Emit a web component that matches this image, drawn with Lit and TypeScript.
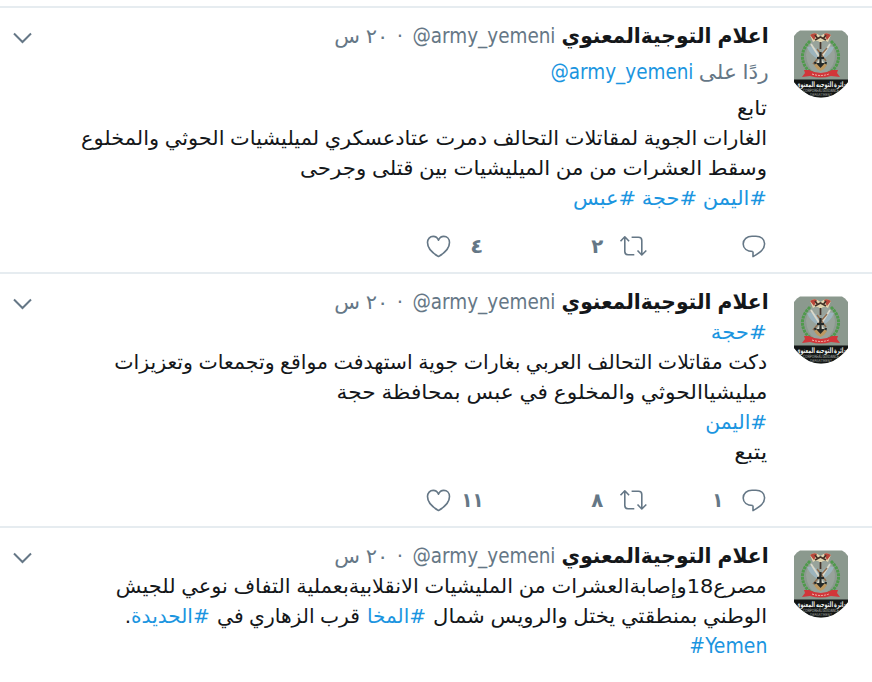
import { LitElement, html, svg, css, nothing } from 'lit';
import { customElement, property } from 'lit/decorators.js';

// One line of text, stretched horizontally to a given width.
@customElement('fit-text')
class FitText extends LitElement {
  static styles = css`
    :host {
      display: block;
      flex: none;
      white-space: nowrap;
      height: 100%;
    }

    .text {
      display: inline-block;
      transform-origin: right center;
    }
  `;

  @property({ type: Number }) width = 0;

  firstUpdated() {
    const text = this.renderRoot.querySelector('.text') as HTMLElement;
    const natural = text.getBoundingClientRect().width;
    this.style.width = `${this.width}px`;
    text.style.transform = `scaleX(${this.width / natural})`;
  }

  render() {
    return html`<span class="text"><slot></slot></span>`;
  }
}

interface Segment {
  width: number;
  parts: string[];
}

interface Tweet {
  reply?: boolean;
  lines: Segment[][];
  counts?: { reply?: Segment; retweet: Segment; like: Segment };
}

const seg = (width: number, ...parts: string[]): Segment => ({ width, parts });

const tweets: Tweet[] = [
  {
    reply: true,
    lines: [
      [seg(30, 'تابع')],
      [seg(686, 'الغارات الجوية لمقاتلات التحالف دمرت عتادعسكري لميليشيات الحوثي والمخلوع')],
      [seg(467, 'وسقط العشرات من من الميليشيات بين قتلى وجرحى')],
      [seg(194, '#اليمن', ' ', '#حجة', ' ', '#عبس')],
    ],
    counts: { retweet: seg(12, '٢'), like: seg(13, '٤') },
  },
  {
    lines: [
      [seg(56, '#حجة')],
      [seg(653, 'دكت مقاتلات التحالف العربي بغارات جوية استهدفت مواقع وتجمعات وتعزيزات')],
      [seg(431, 'ميليشياالحوثي والمخلوع في عبس بمحافظة حجة')],
      [seg(62, '#اليمن')],
      [seg(33, 'يتبع')],
    ],
    counts: { reply: seg(11, '١'), retweet: seg(12, '٨'), like: seg(22, '١١') },
  },
  {
    lines: [
      [seg(651, 'مصرع18وإصابةالعشرات من المليشيات الانقلابيةبعملية التفاف نوعي للجيش')],
      [
        seg(334, 'الوطني بمنطقتي يختل والرويس شمال'),
        seg(59, '#المخا'),
        seg(143, 'قرب الزهاري في'),
        seg(85, '#الحديدة', '.'),
      ],
      [seg(78, '#Yemen')],
    ],
  },
];

const avatar = svg`
  <svg class="avatar" viewBox="0 0 56 68">
    <defs>
      <clipPath id="frame">
        <path d="M7 .5H49Q52 1.500 55 6V52Q49 60 40 65Q28 70 16 65Q7 60 1 52V6Q4 1.500 7 .5Z" />
      </clipPath>
    </defs>
    <g clip-path="url(#frame)">
      <rect width="56" height="68" fill="#8b998e" />
      <path d="M27.500 7Q15 9 13 25Q14 37 22 43H33Q42 36 42 25Q40 9 27.500 7Z" fill="#98a39b" />
      <g fill="none" stroke="#4f9a4c" stroke-width="3" stroke-dasharray="2.800 .8">
        <path d="M17 11Q5 23 12 36Q15 41 21 44" />
        <path d="M38 11Q50 23 43 36Q40 41 34 44" />
      </g>
      <path d="M14 17Q21 15 26 21L25 29Q17 25 14 17ZM41 17Q34 15 29 21L30 29Q38 25 41 17Z" fill="#9cb4bd" />
      <path d="M18 14L32 36M37 14L23 36" stroke="#dad8ca" stroke-width="1.800" />
      <path d="M20 34L34 18M24 19L33 31" stroke="#8f6d50" stroke-width="1.500" />
      <path d="M17 5Q22 1 27.500 6Q33 1 38 5L35 12Q31 9 27.500 13Q24 9 20 12Z" fill="#e2d6b1" />
      <path d="M17 5Q21 2 24 4L21 10ZM38 5Q34 2 31 4L34 10Z" fill="#b9473b" />
      <path d="M22 5L25 9M33 5L30 9M22 10L27.500 7L33 10M27.500 12V19" fill="none" stroke="#443329" stroke-width="1.700" />
      <path d="M27.500 22V38M22 32Q23 37 27.500 38Q32 37 33 32M24 28H31" fill="none" stroke="#252a29" stroke-width="2.200" />
      <path d="M21 35L24 33L27.500 36L31 33L34 35L31 39L27.500 41L24 39Z" fill="#bd9860" />
      <path d="M23 33H32L27.500 38Z" fill="#252a29" />
      <path d="M11 40H16Q28 46 39 40H45L44 43L47 47L38 46Q28 49 17 46L9 47L12 43Z" fill="#d2363a" />
      <path d="M19 44Q28 47 36 44" fill="none" stroke="#efb3aa" stroke-width="1" stroke-dasharray="2 1" />
      <rect y="49.500" width="56" height="19" fill="#121514" />
      <text x="28" y="56.500" text-anchor="middle" direction="rtl" font-size="7.500" font-weight="bold" fill="#edf0ed" textLength="50" lengthAdjust="spacingAndGlyphs">دائرة التوجيه المعنوي</text>
      <text x="28" y="61.500" text-anchor="middle" direction="ltr" font-size="4.500" fill="#b5bab6" textLength="36" lengthAdjust="spacingAndGlyphs">CORPOREAL GUIDANCE</text>
      <text x="28" y="65.500" text-anchor="middle" direction="ltr" font-size="3.800" fill="#9aa09c" textLength="22" lengthAdjust="spacingAndGlyphs">DEPARTMENT</text>
    </g>
  </svg>`;

const replyIcon = svg`
  <svg class="icon comment" viewBox="0 0 24 23">
    <path d="M10.800 16.500C5 16.300 1.200 13.300 1.200 9C1.200 4.300 5 1.200 10 1.200H14C19 1.200 22.600 4.200 22.600 8.700C22.600 15 16.500 18.500 11 21.600V16.500" />
  </svg>`;

const retweetIcon = svg`
  <svg class="icon retweet" viewBox="0 0 29 22">
    <path d="M1.500 6.300L5.800 1.800L10.100 6.300M5.800 2.300V16.500Q5.800 19.700 9 19.700H15.300M12.600 2.300H19.500Q22.800 2.300 22.800 5.500V19.700M18.500 15.500L22.800 20L27.300 15.500" />
  </svg>`;

const likeIcon = svg`
  <svg class="icon like" viewBox="0 0 25 23">
    <path d="M12.500 21.500C8 19 1.500 14 1.500 7.600C1.500 3.800 4 1.400 7.200 1.400C9.600 1.400 11.500 2.800 12.500 5.200C13.500 2.800 15.400 1.400 17.800 1.400C21 1.400 23.500 3.800 23.500 7.600C23.500 14 17 19 12.500 21.500Z" />
  </svg>`;

@customElement('app-root')
class AppRoot extends LitElement {
  static styles = css`
    :host {
      display: block;
      box-sizing: border-box;
      height: 682px;
      padding-top: 6px;
      overflow: hidden;
      background: #fff;
      color: #14171a;
      direction: rtl;
      font-family: "DejaVu Sans", sans-serif;
      font-size: 20px;
      line-height: 30px;
      word-spacing: -1px;
    }

    .tweet {
      display: grid;
      grid-template-columns: 56px 1fr;
      column-gap: 24px;
      padding: 14px 23px 0 12px;
      border-top: 2px solid #e6ecf0;
    }

    .avatar {
      display: block;
      width: 56px;
      height: 68px;
      margin-top: 8px;
    }

    .header {
      display: flex;
      height: 29px;
      color: #657786;
      line-height: 28px;
    }

    .name {
      color: #14171a;
      font-size: 21.5px;
      font-weight: bold;
      margin-left: 7px;
    }

    .latin {
      font-family: "DejaVu Sans Condensed", "DejaVu Sans", sans-serif;
      font-stretch: condensed;
      font-size: 20.5px;
    }

    .dot {
      width: 24px;
      text-align: center;
    }

    .chevron {
      width: 21px;
      height: 12px;
      margin: 10px auto 0 0;
      fill: none;
      stroke: #657786;
      stroke-width: 2;
    }

    .reply {
      display: flex;
      gap: 6px;
      height: 30px;
      padding: 6px 0;
      color: #657786;
    }

    .body {
      padding-right: 2px;
    }

    .line {
      display: flex;
      gap: 7px;
      height: 30px;
    }

    .link {
      color: #1b95e0;
    }

    .actions {
      display: flex;
      height: 30px;
      padding: 18px 3px 11px 0;
      color: #657786;
      font-size: 20px;
      font-weight: bold;
    }

    .action {
      display: flex;
      align-items: center;
      gap: 16px;
    }

    .action:nth-child(1) {
      width: 118px;
      gap: 19px;
    }

    .action:nth-child(2) {
      width: 165px;
    }

    .action:nth-child(3) {
      gap: 0;
    }

    .icon {
      flex: none;
      fill: none;
      stroke: #657786;
      stroke-width: 1.6;
      stroke-linejoin: round;
    }

    .comment {
      width: 24px;
      height: 23px;
    }

    .retweet {
      width: 29px;
      height: 22px;
    }

    .like {
      width: 25px;
      height: 23px;
      margin-right: 19px;
    }

    .wide .like {
      margin-right: 10px;
    }
  `;

  renderPart(part: string) {
    if (!part.startsWith('#')) return part;
    return /[a-z]/i.test(part)
      ? html`<bdi class="link latin" dir="ltr">${part}</bdi>`
      : html`<bdi class="link" dir="rtl">${part}</bdi>`;
  }

  renderSegment(segment?: Segment) {
    return segment
      ? html`<fit-text width=${segment.width}>${segment.parts.map((part) => this.renderPart(part))}</fit-text>`
      : nothing;
  }

  renderActions({ counts }: Tweet) {
    if (!counts) return nothing;
    const wide = counts.like.width > 16;
    return html`
      <div class="actions">
        <div class="action">${replyIcon}${this.renderSegment(counts.reply)}</div>
        <div class="action">${retweetIcon}${this.renderSegment(counts.retweet)}</div>
        <div class="action ${wide ? 'wide' : ''}">
          ${this.renderSegment(counts.like)}${likeIcon}
        </div>
      </div>
    `;
  }

  renderTweet(tweet: Tweet) {
    return html`
      <article class="tweet">
        ${avatar}
        <div>
          <div class="header">
            <fit-text class="name" width="207">اعلام التوجيةالمعنوي</fit-text>
            <fit-text width="143"><bdi class="latin" dir="ltr">@army_yemeni</bdi></fit-text>
            <span class="dot">·</span>
            <fit-text width="54">٢٠ س</fit-text>
            <svg class="chevron" viewBox="0 0 21 12"><path d="M2 1.500L10.500 10L19 1.500" /></svg>
          </div>
          ${tweet.reply
            ? html`<div class="reply">
                <fit-text width="70">ردًا على</fit-text>
                <fit-text width="143"><bdi class="link latin" dir="ltr">@army_yemeni</bdi></fit-text>
              </div>`
            : nothing}
          <div class="body">
            ${tweet.lines.map(
              (line) => html`<div class="line">${line.map((segment) => this.renderSegment(segment))}</div>`
            )}
          </div>
          ${this.renderActions(tweet)}
        </div>
      </article>
    `;
  }

  render() {
    return tweets.map((tweet) => this.renderTweet(tweet));
  }
}
